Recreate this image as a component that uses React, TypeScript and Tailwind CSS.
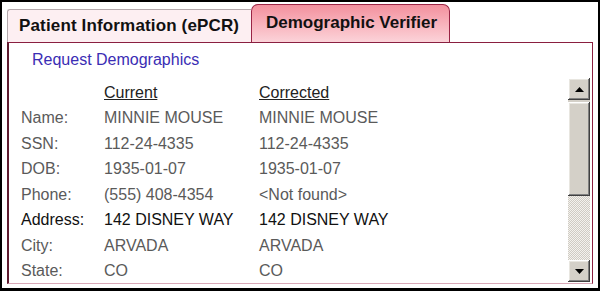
import React from 'react';

const rows: { label: string; current: string; corrected: string; strong?: boolean }[] = [
  { label: 'Name:', current: 'MINNIE MOUSE', corrected: 'MINNIE MOUSE' },
  { label: 'SSN:', current: '112-24-4335', corrected: '112-24-4335' },
  { label: 'DOB:', current: '1935-01-07', corrected: '1935-01-07' },
  { label: 'Phone:', current: '(555) 408-4354', corrected: '<Not found>' },
  { label: 'Address:', current: '142 DISNEY WAY', corrected: '142 DISNEY WAY', strong: true },
  { label: 'City:', current: 'ARVADA', corrected: 'ARVADA' },
  { label: 'State:', current: 'CO', corrected: 'CO' },
];

const bevel =
  'bg-[#d4d0c8] shadow-[inset_-1px_-1px_#404040,inset_1px_1px_#ffffff,inset_-2px_-2px_#808080,inset_2px_2px_#e8e6e0]';

const ScrollButton: React.FC<{ up?: boolean }> = ({ up }) => (
  <div className={`h-[22px] flex items-center justify-center ${bevel}`}>
    <svg width="9" height="5" viewBox="0 0 9 5">
      {up ? <polygon points="4.5,0 9,5 0,5" fill="#000" /> : <polygon points="0,0 9,0 4.5,5" fill="#000" />}
    </svg>
  </div>
);

const App: React.FC = () => {
  return (
    <div
      className="w-[600px] h-[291px] bg-white border-black border-l-2 border-t-2 border-r-2 border-b-[3px] pl-[5px] pt-[2px] overflow-hidden"
      style={{ fontFamily: '"Liberation Sans", Arial, sans-serif' }}
    >
      {/* tabs */}
      <div className="flex items-end h-[38px]">
        <div className="w-[244px] h-[33px] bg-[#fdeff2] border-t border-l border-[#b4a8ac] rounded-tl-[3px] flex items-center pl-[11px] text-[17px] font-bold text-[#111] tracking-[0.15px]">
          Patient Information (ePCR)
        </div>
        <div className="w-[199px] h-[38px] rounded-t-[7px] border border-b-0 border-[#9a2445] bg-gradient-to-b from-[#f2909e] to-[#fbd3d9] flex items-center pl-[14px] pb-[1px] text-[17px] font-bold text-[#111]">
          Demographic Verifier
        </div>
      </div>

      {/* panel */}
      <div className="w-[586px] h-[242px] border-t border-r border-[#8a1f40] border-l-2 border-l-[#5e1a2e] border-b border-b-[#d9a9b8] flex">
        <div className="flex-1 pt-[4px] text-[16px]">
          <div className="pl-[23px] leading-[25.5px] text-[#3a2db4]">Request Demographics</div>
          <div className="mt-[7px] pl-[12px] grid grid-cols-[83px_155px_1fr] leading-[25.5px]">
            <div />
            <div className="text-[#222] underline underline-offset-[1px]">Current</div>
            <div className="text-[#222] underline underline-offset-[1px]">Corrected</div>
            {rows.map((r) => (
              <React.Fragment key={r.label}>
                <div className={r.strong ? 'text-[#111]' : 'text-[#5a5a5a]'}>{r.label}</div>
                <div className={r.strong ? 'text-[#111]' : 'text-[#5a5a5a]'}>{r.current}</div>
                <div className={r.strong ? 'text-[#111]' : 'text-[#5a5a5a]'}>{r.corrected}</div>
              </React.Fragment>
            ))}
          </div>
        </div>

        {/* scrollbar */}
        <div className="w-[22px] mr-[2px] mt-[35px] mb-[1px] flex flex-col">
          <ScrollButton up />
          <div className="h-[2px] bg-[#d4d0c8]" />
          <div className={`h-[94px] ${bevel}`} />
          <div className="flex-1 bg-[repeating-conic-gradient(#cfcbc3_0_25%,#f4f2ee_0_50%)] bg-[length:2px_2px]" />
          <ScrollButton />
        </div>
      </div>
    </div>
  );
};

export default App;
